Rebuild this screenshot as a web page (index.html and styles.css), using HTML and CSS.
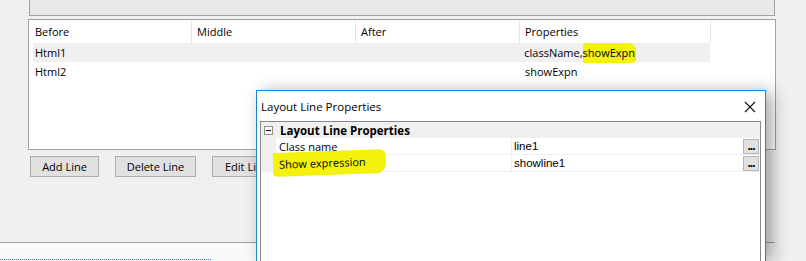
FILE: index.html
```html
<!DOCTYPE html>
<html lang="en">
	<head>
	<meta charset="UTF-8" />
	<title>Layout Lines</title>
	<link rel="stylesheet" href="styles.css">
	</head>
	<body>
		<div class="window">
			<div class="toppanel"></div>
			<div class="listview">
				<div class="row head">
					<span class="col">Before</span>
					<span class="col">Middle</span>
					<span class="col">After</span>
					<span class="col last">Properties</span>
				</div>
				<div class="row sel">
					<span class="col">Html1</span>
					<span class="col"></span>
					<span class="col"></span>
					<span class="col last">className,<mark class="hl">showExpn</mark></span>
				</div>
				<div class="row">
					<span class="col">Html2</span>
					<span class="col"></span>
					<span class="col"></span>
					<span class="col last">showExpn</span>
				</div>
			</div>
			<div class="buttons">
				<button class="btn add">Add Line</button>
				<button class="btn del">Delete Line</button>
				<button class="btn edit">Edit Line</button>
			</div>
			<div class="bottom">
				<div class="bottomleft"><div class="dots"></div></div>
				<div class="bottomright"></div>
			</div>
		</div>

		<div class="dialog">
			<div class="titlebar">
				<span>Layout Line Properties</span>
				<svg class="close" width="12" height="12" viewBox="0 0 12 12"><path d="M1 1 L11 11 M11 1 L1 11" stroke="#111" stroke-width="1.1" fill="none"/></svg>
			</div>
			<div class="grid">
				<div class="cat">
					<span class="minus"></span>
					<b>Layout Line Properties</b>
				</div>
				<div class="prop">
					<span class="gutter"></span>
					<span class="name">Class name</span>
					<span class="value">line1</span>
					<span class="ell">...</span>
				</div>
				<div class="prop">
					<span class="gutter"></span>
					<span class="name"><mark class="hl2">Show expression</mark></span>
					<span class="value">showline1</span>
					<span class="ell">...</span>
				</div>
			</div>
		</div>
	</body>
</html>
```

FILE: styles.css
```css
* { box-sizing: border-box; }
html { font-family: "Open Sans", "Noto Sans", sans-serif; font-size: 11px; }
body { margin: 0; width: 806px; height: 261px; overflow: hidden; background: #f0f0f0; color: #000; position: relative; }

.window { display: flex; flex-direction: column; }
.toppanel { margin-left: 29px; width: 746px; height: 16px; background: #e8e8e8; border: 1px solid #a0a0a0; border-top: none; }

.listview { margin: 3px 0 0 28px; width: 748px; height: 131px; background: #fff; border: 1px solid #a0a0a0; padding: 0 0 0 4px; }
.row { display: flex; height: 19px; align-items: center; }
.row.head { height: 23px; }
.col { width: 164px; padding-left: 5px; height: 100%; display: flex; align-items: center; }
.col:first-child { width: 159px; padding-left: 2px; }
.head .col { border-right: 1px solid #e5e5e5; }
.col.last { width: 191px; }
.row.sel { background: #f0f0f0; width: 677px; }
.hl { background: #f4f20a; padding: 2px 1px 3px 0; border-radius: 3px 8px 4px 2px; }

.buttons { display: flex; gap: 16px; margin: 6px 0 0 30px; }
.btn { font: inherit; height: 21px; background: #e1e1e1; border: 1px solid #adadad; padding: 0; }
.btn.add { width: 69px; }
.btn.del { width: 81px; }
.btn.edit { width: 81px; text-align: left; padding-left: 12px; }

.bottom { display: flex; margin-top: 65px; height: 19px; }
.bottomleft { width: 765px; border-top: 1px solid #a0a0a0; background: #fafafa; display: flex; align-items: flex-end; padding-bottom: 1px; }
.dots { width: 211px; border-bottom: 1px dotted #1e7ce8; }
.bottomright { width: 10px; border-top: 1px solid #a0a0a0; border-left: 1px solid #a0a0a0; background: #f4f4f4; }

.dialog { position: absolute; left: 256px; top: 90px; width: 510px; height: 171px; background: #fff; border: 1px solid #1883d7; border-bottom: none; padding: 0 4px 0 3px; box-shadow: 6px 2px 16px rgba(0, 0, 0, 0.35); display: flex; flex-direction: column; }
.titlebar { height: 30px; flex: none; display: flex; align-items: center; justify-content: space-between; padding: 0 5px 0 1px; font-size: 11.5px; }
.close { margin-top: 1px; }
.grid { border: 1px solid #828790; border-bottom: none; flex: 1; font-size: 11px; }
.cat { display: flex; align-items: center; height: 16px; background: #f0f0f0; padding-left: 3px; gap: 7px; }
.cat b { font-weight: 700; font-size: 11.5px; }
.minus { width: 9px; height: 9px; border: 1px solid #919191; background: #fff; position: relative; }
.minus::after { content: ""; position: absolute; left: 1px; top: 3px; width: 5px; height: 1px; background: #000; }
.prop { display: flex; height: 17px; border-bottom: 1px solid #f0f0f0; align-items: center; }
.gutter { width: 15px; height: 100%; background: #f0f0f0; }
.name { width: 236px; height: 100%; padding-left: 3px; display: flex; align-items: center; border-right: 1px solid #f0f0f0; }
.value { flex: 1; padding-left: 2px; font-family: "Liberation Sans", Arial, sans-serif; font-size: 11.5px; color: #000; }
.ell { width: 16px; height: 15px; margin-right: 1px; background: #e1e1e1; border: 1px solid #b5b5b5; font-family: "Liberation Sans", Arial, sans-serif; font-weight: 700; font-size: 12px; line-height: 13px; text-align: center; letter-spacing: -1px; }
.hl2 { background: #f4f20a; padding: 4px 20px 5px 6px; margin-left: -6px; border-radius: 2px 6px 10px 4px; transform: rotate(-2deg); display: inline-block; }
```
